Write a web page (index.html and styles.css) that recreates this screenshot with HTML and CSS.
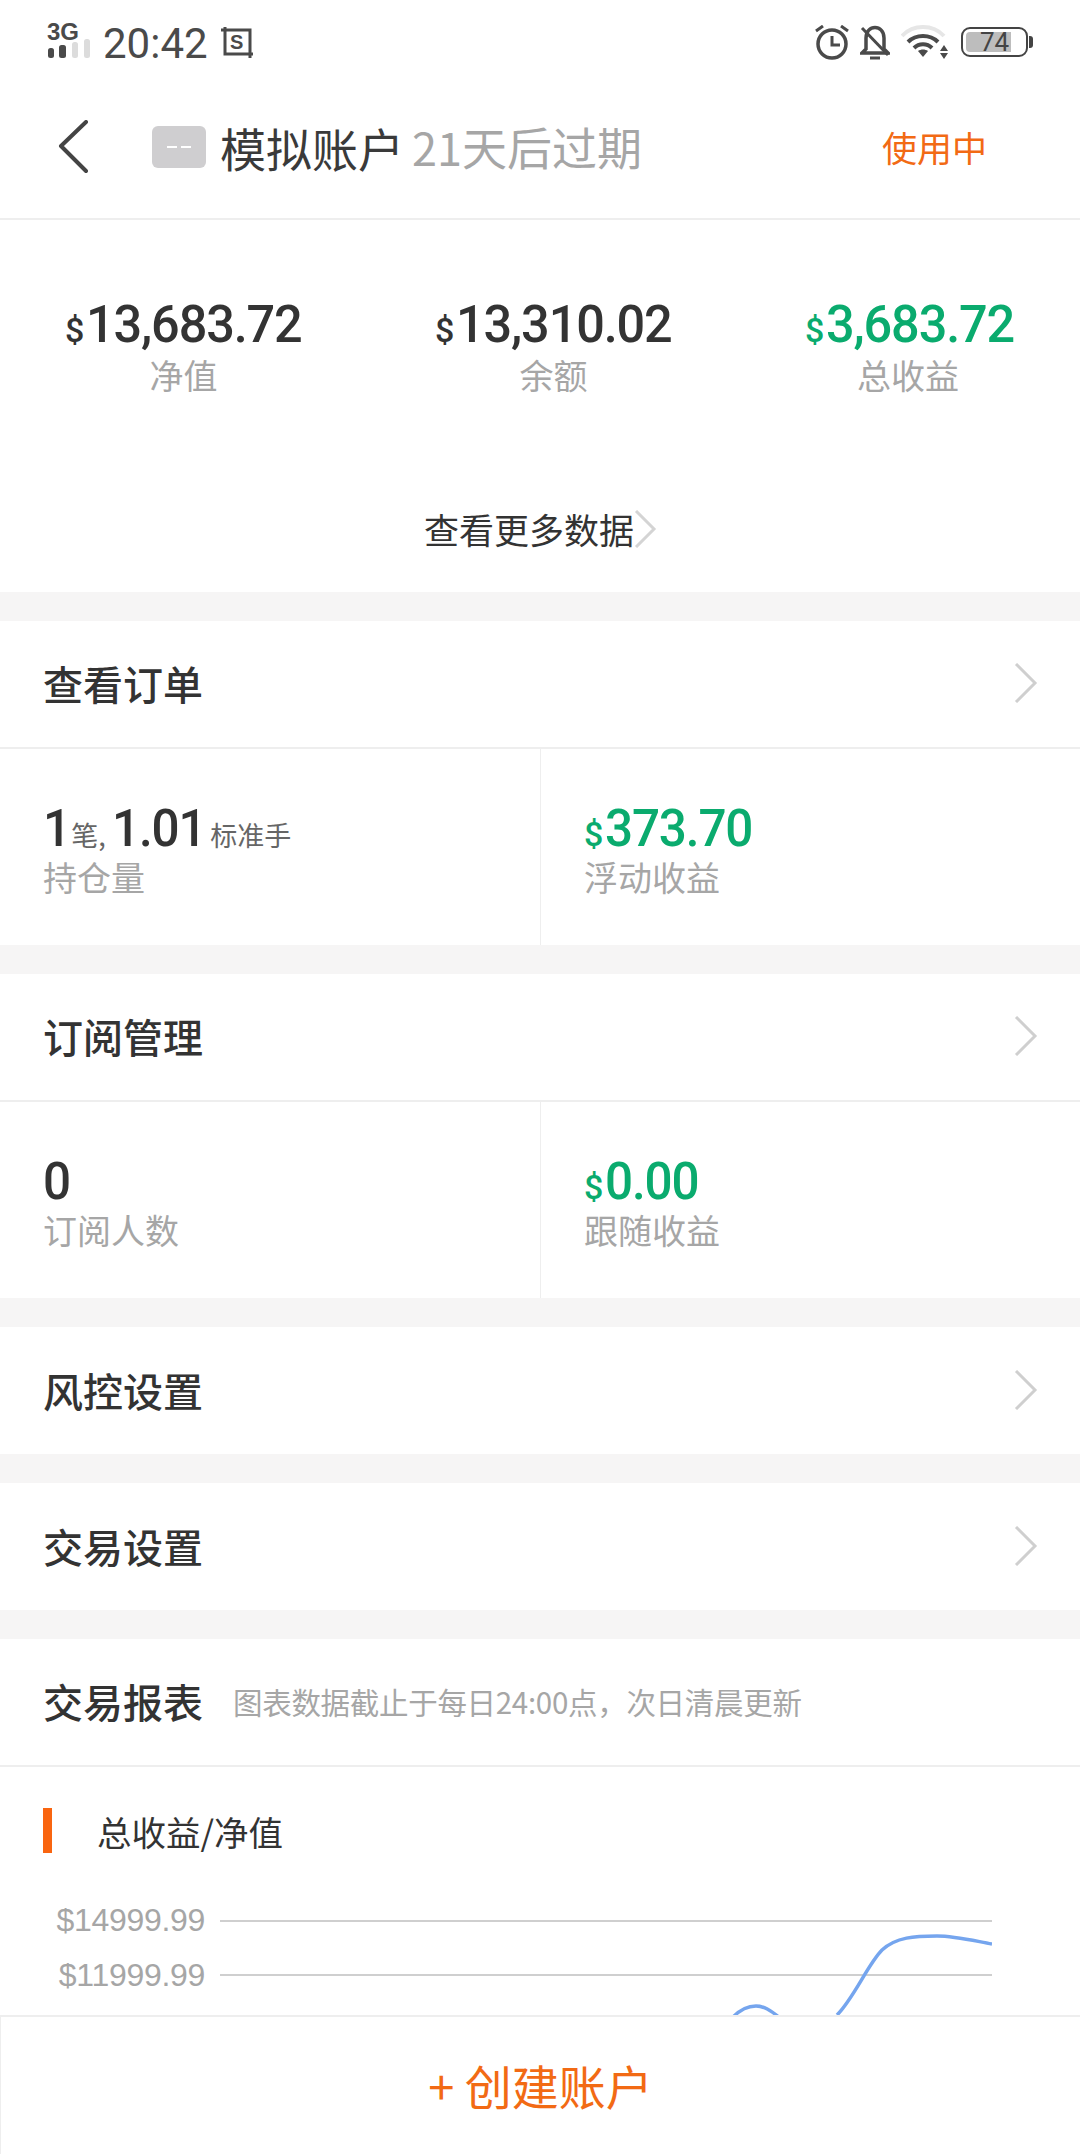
FILE: index.html
```html
<!DOCTYPE html>
<html lang="zh">
<head>
<meta charset="utf-8">
<title>模拟账户</title>
<link rel="stylesheet" href="styles.css">
</head>
<body>
<div class="page">
  <div class="status">
    <div class="status-left">
      <svg class="sig" width="44" height="43" viewBox="0 -6 44 43">
        <text x="0" y="18" class="sig-text">3G</text>
        <rect x="1" y="26" width="6" height="10" rx="2.500" fill="#4a4a4a"/>
        <rect x="12" y="23" width="7" height="13" rx="2.500" fill="#4a4a4a"/>
        <rect x="25" y="20" width="6" height="16" rx="2.500" fill="#dcdcdc"/>
        <rect x="37" y="17" width="6" height="19" rx="2.500" fill="#dcdcdc"/>
      </svg>
      <span class="time">20:42</span>
      <svg class="shot" width="32" height="31" viewBox="0 0 32 31" fill="none" stroke="#4a4a4a" stroke-width="3">
        <path d="M0 3H29V31M4 0V27H32"/>
        <text x="9" y="22" class="shot-s">S</text>
      </svg>
    </div>
    <div class="status-right">
      <svg width="34" height="36" viewBox="0 0 34 36" fill="none" stroke="#4a4a4a" stroke-width="3.500">
        <circle cx="17" cy="19" r="14"/>
        <path d="M17 11V20H25" stroke-width="3"/>
        <path d="M1 6L8 1M33 6L26 1" stroke-width="3"/>
      </svg>
      <svg class="bell" width="30" height="36" viewBox="0 0 30 36" fill="none" stroke="#4a4a4a" stroke-width="3.500">
        <path d="M6 24V13C6 -1 24 -1 24 13V24L28 28H2L6 24Z"/>
        <path d="M2 3L28 30" stroke-width="3"/>
        <path d="M10 33H20" stroke-width="3"/>
      </svg>
      <svg class="wifi" width="47" height="36" viewBox="0 0 47 36" fill="none">
        <path d="M1 11C12 -1 32 -1 43 11" stroke="#e6e6e6" stroke-width="4"/>
        <path d="M7 17C15 9 29 9 37 17" stroke="#4a4a4a" stroke-width="4"/>
        <path d="M13 23C18 18 26 18 31 23" stroke="#4a4a4a" stroke-width="4"/>
        <path d="M17 26C20 24 24 24 27 26L22 32Z" fill="#4a4a4a"/>
        <path d="M43 20L47 26H39ZM43 34L47 28H39Z" fill="#4a4a4a"/>
      </svg>
      <div class="battery">
        <div class="batt-body"><span class="batt-fill"></span><span class="batt-num">74</span></div>
        <span class="batt-cap"></span>
      </div>
    </div>
  </div>

  <header class="nav">
    <svg class="back" width="32" height="54" viewBox="0 0 32 54" fill="none" stroke="#444" stroke-width="4" stroke-linecap="round" stroke-linejoin="round">
      <path d="M28 2L3 26L28 51"/>
    </svg>
    <span class="tag"><i></i><i></i></span>
    <span class="title">模拟账户</span>
    <span class="expire">21天后过期</span>
    <span class="state">使用中</span>
  </header>

  <section class="summary">
    <div class="summary-grid">
      <div class="cell"><div class="num"><small>$</small><span class="sq">13,683.72</span></div><div class="lab">净值</div></div>
      <div class="cell"><div class="num"><small>$</small><span class="sq">13,310.02</span></div><div class="lab">余额</div></div>
      <div class="cell cell-c"><div class="num green"><small>$</small><span class="sq">3,683.72</span></div><div class="lab">总收益</div></div>
    </div>
    <div class="more">
      <span>查看更多数据</span>
      <svg class="chev-s" width="23" height="38" viewBox="0 0 23 38" fill="none" stroke="#d4d4d4" stroke-width="3"><path d="M2 1L20 19L2 37"/></svg>
    </div>
  </section>

  <section class="block">
    <div class="row"><span class="row-title">查看订单</span><svg class="chev" width="24" height="40" viewBox="0 0 24 40" fill="none" stroke="#cfcfcf" stroke-width="3"><path d="M2 1L21 20L2 39"/></svg></div>
    <div class="split">
      <div class="half">
        <div class="num tight"><span class="sq">1</span><small class="unit">笔,</small><span class="sq second">1.01</span><small class="unit">标准手</small></div>
        <div class="lab">持仓量</div>
      </div>
      <div class="half half-r">
        <div class="num tight green"><small>$</small><span class="sq">373.70</span></div>
        <div class="lab">浮动收益</div>
      </div>
    </div>
  </section>

  <section class="block">
    <div class="row"><span class="row-title">订阅管理</span><svg class="chev" width="24" height="40" viewBox="0 0 24 40" fill="none" stroke="#cfcfcf" stroke-width="3"><path d="M2 1L21 20L2 39"/></svg></div>
    <div class="split">
      <div class="half">
        <div class="num tight"><span class="sq">0</span></div>
        <div class="lab">订阅人数</div>
      </div>
      <div class="half half-r">
        <div class="num tight green"><small>$</small><span class="sq">0.00</span></div>
        <div class="lab">跟随收益</div>
      </div>
    </div>
  </section>

  <section class="block">
    <div class="row plain"><span class="row-title">风控设置</span><svg class="chev" width="24" height="40" viewBox="0 0 24 40" fill="none" stroke="#cfcfcf" stroke-width="3"><path d="M2 1L21 20L2 39"/></svg></div>
  </section>

  <section class="block">
    <div class="row plain"><span class="row-title">交易设置</span><svg class="chev" width="24" height="40" viewBox="0 0 24 40" fill="none" stroke="#cfcfcf" stroke-width="3"><path d="M2 1L21 20L2 39"/></svg></div>
  </section>

  <section class="block report">
    <div class="row report-head"><span class="row-title">交易报表</span><span class="note">图表数据截止于每日24:00点，次日清晨更新</span></div>
    <div class="chart-title"><span class="bar"></span><span>总收益/净值</span></div>
    <div class="chart">
      <div class="axis">
        <span>$14999.99</span>
        <span>$11999.99</span>
      </div>
      <svg class="plot" width="772" height="160" viewBox="0 0 772 160" fill="none">
        <path d="M0 1H772M0 55H772" stroke="#cfcfcf" stroke-width="2"/>
        <path d="M513 97C522 88 530 86 536 86C544 86 550 90 560 98M617 95C634 78 648 44 662 30C676 17 695 16 717 16C735 16 755 21 772 24" stroke="#75a5ee" stroke-width="3.500"/>
      </svg>
    </div>
  </section>

  <footer class="create">+ 创建账户</footer>
</div>
</body>
</html>
```

FILE: styles.css
```css
* { box-sizing: border-box; }
html, body { margin: 0; padding: 0; background: #f6f5f5; }
.page {
  position: relative;
  width: 1080px;
  height: 2154px;
  overflow: hidden;
  background: #f6f5f5;
  font-family: "Noto Sans CJK SC", "Roboto", sans-serif;
  color: #333;
}
.status {
  height: 84px;
  background: #fff;
  display: flex;
  justify-content: space-between;
  padding: 22px 47px 0 47px;
}
.status-left { display: flex; align-items: flex-start; }
.sig { margin-top: -6px; }
.sig-text { font: 700 24px "Liberation Sans", sans-serif; fill: #4a4a4a; }
.time {
  font: 400 42px/44px "Roboto", sans-serif;
  color: #4a4a4a;
  margin-left: 12px;
  margin-top: 0;
}
.shot { margin-left: 13px; margin-top: 5px; }
.shot-s { font: 700 20px "Liberation Sans", sans-serif; fill: #4a4a4a; stroke: none; }
.status-right { display: flex; align-items: flex-start; gap: 11px; padding-top: 3px; }
.battery { display: flex; align-items: center; height: 30px; margin-top: 2px; margin-left: 2px; }
.batt-body {
  position: relative;
  width: 67px;
  height: 30px;
  border: 2px solid #444;
  border-radius: 9px;
}
.batt-fill {
  position: absolute;
  left: 3px; top: 3px; bottom: 3px;
  width: 45px;
  background: #bdbdbd;
  border-radius: 4px 0 0 4px;
}
.batt-num {
  position: absolute;
  left: 17px; top: -1px;
  font: 400 26px/28px "Roboto", sans-serif;
  color: #444;
}
.batt-cap { width: 4px; height: 12px; background: #444; border-radius: 0 3px 3px 0; margin-left: 1px; }

.nav {
  height: 136px;
  background: #fff;
  border-bottom: 2px solid #eeeeee;
  display: flex;
  align-items: center;
  padding: 0 0 9px 58px;
}
.back { flex: none; }
.tag {
  width: 54px;
  height: 42px;
  margin-left: 62px;
  background: #cfced0;
  border-radius: 6px;
  display: flex;
  align-items: center;
  justify-content: center;
  gap: 4px;
}
.tag i { width: 10px; height: 2px; background: #fff; }
.title { font-size: 46px; margin-left: 14px; color: #3a3a3a; line-height: 56px; }
.expire { font-size: 45px; margin-left: 8px; color: #a6a6a6; line-height: 56px; }
.state { font-size: 35px; color: #f26a14; margin-left: auto; margin-right: 93px; line-height: 48px; }

.summary { height: 372px; background: #fff; }
.summary-grid { display: flex; gap: 133px; height: 196px; padding: 80px 0 0 65px; }
.cell { width: 237px; text-align: center; }
.cell-c { width: 206px; }
.num {
  font: 500 52px/50px "Roboto", sans-serif;
  letter-spacing: -1.2px;
  color: #333;
  white-space: nowrap;
  text-align: left;
}
.num small { font-size: 34px; letter-spacing: 0; margin-right: 2px; }
.num.green { color: #0aab6e; }
.sq { display: inline-block; transform: scaleX(0.97); transform-origin: left center; }
.lab { font-size: 34px; line-height: 40px; color: #a6a6a6; }
.more {
  display: flex;
  justify-content: center;
  align-items: center;
  font-size: 35px;
  line-height: 48px;
  color: #333;
  padding-top: 89px;
  padding-left: 1px;
}

.block { background: #fff; margin-top: 29px; }
.row {
  height: 128px;
  display: flex;
  align-items: center;
  justify-content: space-between;
  padding: 0 42px 2px 43px;
  border-bottom: 2px solid #eeeeee;
}
.row.plain { height: 127px; border-bottom: 0; }
.row-title { font-size: 40px; font-weight: 500; color: #333; line-height: 54px; }
.split { display: flex; height: 196px; }
.half { width: 540px; padding: 55px 0 0 43px; }
.half .lab { margin-top: 3px; }
.half-r { border-left: 1px solid #eeeeee; padding-left: 43px; }
.tight { display: flex; align-items: baseline; height: 50px; }
.tight .sq { transform: scaleX(0.95); }
.tight .second { margin-left: 6px; }
.num .unit { font: 400 27px "Noto Sans CJK SC", sans-serif; color: #666; margin: 0; letter-spacing: 0; }

.report { height: 600px; }
.report-head { justify-content: flex-start; height: 128px; }
.note { font-size: 29.500px; color: #a6a6a6; margin-left: 30px; line-height: 40px; letter-spacing: -0.3px; }
.chart-title {
  display: flex;
  align-items: center;
  height: 45px;
  margin: 41px 0 0 43px;
  font-size: 34.500px;
  color: #333;
}
.bar { width: 9px; height: 45px; background: #f96510; margin-right: 45px; }
.chart { display: flex; margin-top: 67px; padding-left: 56px; }
.axis {
  width: 149px;
  display: flex;
  flex-direction: column;
  text-align: right;
  font: 400 32px/55px "Liberation Sans", sans-serif;
  color: #a6a6a6;
  margin-top: -27px;
  letter-spacing: -0.3px;
}
.plot { margin-left: 15px; flex: none; }
.create {
  position: absolute;
  left: 0; right: 0; bottom: 0;
  height: 139px;
  padding-bottom: 3px;
  background: #fff;
  border-top: 2px solid #eeeeee;
  border-left: 1px solid #eeeeee;
  display: flex;
  align-items: center;
  justify-content: center;
  font-size: 47px;
  color: #f26a14;
}
```
